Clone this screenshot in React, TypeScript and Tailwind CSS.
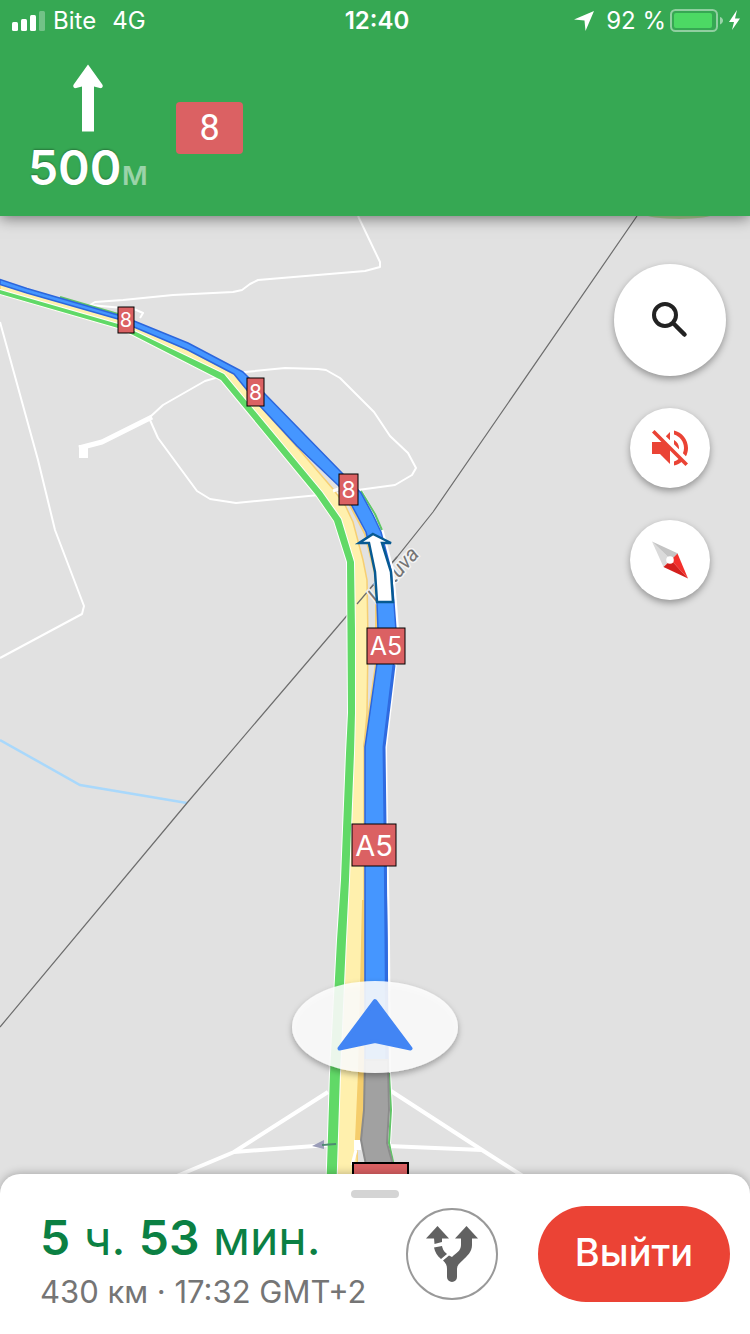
import type { ReactNode } from "react"
import { cx } from "class-variance-authority"

type Shield = {
    label: string,
    x: number,
    y: number,
    width: number,
    height: number,
    fontSize: number,
}

const shields: Shield[] = [
    { label: "8", x: 118, y: 307, width: 16, height: 26, fontSize: 20 },
    { label: "8", x: 247, y: 378, width: 17, height: 28, fontSize: 21 },
    { label: "8", x: 339, y: 474, width: 19, height: 31, fontSize: 23 },
    { label: "A5", x: 367, y: 628, width: 38, height: 36, fontSize: 25 },
    { label: "A5", x: 352, y: 824, width: 44, height: 42, fontSize: 29 },
    { label: "", x: 353, y: 1163, width: 55, height: 50, fontSize: 30 },
]

const StatusBar = () => {
    return (
        <div className="grid h-[42px] grid-cols-3 items-center pr-2 pl-3 text-2xl">
            <div className="flex items-center gap-2">
                <svg width="33" height="20" viewBox="0 0 33 20" fill="#fff" aria-hidden="true">
                    <rect x="0" y="11" width="6" height="9" rx="1.5" />
                    <rect x="9" y="8" width="6" height="12" rx="1.5" />
                    <rect x="18" y="4" width="6" height="16" rx="1.5" />
                    <rect x="27" y="0" width="6" height="20" rx="1.5" opacity="0.3" />
                </svg>
                <span>Bite</span>
                <span className="ml-2">4G</span>
            </div>
            <time className="text-center font-semibold">12:40</time>
            <div className="flex items-center justify-end gap-2">
                <svg width="20" height="20" viewBox="0 0 20 20" fill="#fff" className="mr-1" aria-hidden="true">
                    <path d="M20 0 11.5 20 10.5 9.5 0 8.5Z" />
                </svg>
                <span className="whitespace-nowrap">92 %</span>
                <svg width="72" height="24" viewBox="0 0 72 24" className="-ml-1" aria-hidden="true">
                    <rect x="1" y="1" width="46" height="21" rx="4.5" fill="none" stroke="#fff" strokeOpacity="0.45" strokeWidth="2" />
                    <rect x="4" y="4" width="38" height="15" rx="2" fill="#4cd964" />
                    <path d="M50 8c4 1 4 6 0 7.5Z" fill="#fff" opacity="0.5" />
                    <path d="M67 1 59 13h5L62 21 70 9.5h-5Z" fill="#fff" />
                </svg>
            </div>
        </div>
    )
}

const Header = () => {
    return (
        <header className="relative z-10 h-[216px] bg-[#36a853] text-white shadow-[0_2px_14px_rgba(0,0,0,0.5)]">
            <StatusBar />
            <div className="flex items-start pt-[22px] pl-7">
                <div className="flex w-[120px] flex-col items-center">
                    <svg width="30" height="68" viewBox="0 0 30 68" fill="#fff" aria-hidden="true">
                        <path d="M15 .5 29.300 20.500c1.300 2-.3 4.200-2.500 3.500L21 22.500V67.500H9V22.500L3.200 24C1 24.700-.6 22.500.7 20.500Z" />
                    </svg>
                    <p className="mt-3 flex items-baseline leading-[50px]">
                        <span className="text-5xl font-semibold [text-shadow:0_-1px_2px_rgba(0,0,0,0.3)]">500</span>
                        <span className="text-[34px] font-medium text-white/50">м</span>
                    </p>
                </div>
                <span className="mt-[38px] ml-7 flex h-[52px] w-[67px] items-center justify-center rounded bg-[#db6163] font-[Roboto,sans-serif] text-4xl">
                    8
                </span>
            </div>
        </header>
    )
}

const RoadMap = () => {
    return (
        <svg className="block h-full w-full" viewBox="0 216 750 982" preserveAspectRatio="xMidYMin slice" role="img" aria-label="Карта">
            <defs>
                <filter id="puck-shadow" x="-20%" y="-20%" width="140%" height="160%">
                    <feDropShadow dx="0" dy="3" stdDeviation="3" floodColor="#000" floodOpacity="0.35" />
                </filter>
            </defs>
            <rect x="0" y="216" width="750" height="982" fill="#e1e1e1" />
            <ellipse cx="679" cy="214" rx="34" ry="5" fill="#b5d99c" />

            {/* minor roads */}
            <g fill="none" stroke="#fff" strokeLinejoin="round" strokeWidth="2">
                <path d="M358 216 380 262 380 267 365 271 258 280 250 284 242 290 233 292 173 295 123 300 95 302 90 305 134 309 143 313 140 318" />
                <path d="M0 322 38 460 55 530 84 606 82 614 0 658" />
                <path d="M150 417 163 405 205 381 222 376 245 372 285 368 318 369 326 370 340 378 374 412 390 436 408 453 416 468 412 475 395 485 358 490 340 493 236 503 210 499 197 491 158 438 150 420" />
                <path d="M79 448 102 442 152 417" strokeWidth="5" />
                <path d="M83.500 445V458" strokeWidth="9" />
            </g>
            <g fill="none" stroke="#fff" strokeWidth="4">
                <path d="M328 1092 234 1152 165 1181" />
                <path d="M234 1152 328 1145" />
                <path d="M391 1091 482 1150 545 1190" />
                <path d="M388 1146 482 1150" />
            </g>

            {/* river and border */}
            <path d="M0 740 80 785 187 803" fill="none" stroke="#a9d8fb" strokeWidth="2.500" />
            <path d="M637 216 433 512 397 557 187 803 0 1027" fill="none" stroke="#6d6d6d" strokeWidth="1.200" />

            {/* main road */}
            <path
                d="M0 284 27 292 118 318 134 326 188 350 234 374 260 406 297 447 333 489 345 505 353 522 363 560 367 580 368 640 367 713 364 747 364 1073 363 1110 357 1150 358 1198 H328 L333 1073 340 940 344 880 347 753 349 713 348 562 334 521 316 495 221 380 133 335 118 328 0 294Z"
                fill="#fff0ad"
                stroke="#f6cf73"
                strokeWidth="1.500"
            />
            <path d="M362 900H365V1073L362 1140H355L358 1073Z" fill="#f5cd6b" />
            <path d="M354 1140H361V1150H354Z" fill="#fff" />
            <path d="M333 491 341 488 351 503 M356 1150 352 1165" fill="none" stroke="#fff" strokeWidth="3" />
            <path d="M341 490 351 507 365 534 375 574 376 603 376 663 364 747" fill="none" stroke="#f6cf73" strokeWidth="2" />

            {/* alternative route */}
            <path
                d="M0 290 118 324 134 331 224 374 322 492 341 519 354 562 355 630 355 713 354 753 349 880 346 940 340 1073 336 1198 H326 L330 1073 337 940 341 880 346 753 348 713 347 562 334 521 316 495 221 380 133 335 118 328 0 294Z"
                fill="#61d967"
                stroke="#fff"
                strokeWidth="2"
                paintOrder="stroke"
            />

            <path d="M397 557 357 604" stroke="#6d6d6d" strokeWidth="1.200" />
            <text
                transform="translate(377 604) rotate(-49)"
                fontFamily="Roboto, sans-serif"
                fontStyle="italic"
                fontSize="21"
                fill="#757575"
                stroke="#f3f3f3"
                strokeWidth="3"
                paintOrder="stroke"
            >
                Lietuva
            </text>

            {/* active route */}
            <g strokeLinejoin="round">
                <path d="M361 492 374 514 382 532 392 570 395 603 397 630 395 663 385 747 386 825 387 880 388 940 389 1073 391 1110 389 1143 397 1198" fill="none" stroke="#fff" strokeWidth="4" />
                <path d="M60 297 118 314 M361 491 375 514 382 530 M389 1073 391 1110 389 1143 397 1180" fill="none" stroke="#61c467" strokeWidth="2" />
                <path
                    d="M0 279.500 27 288.500 118 315 134 321 188 343 243 372 264 393 342 473 361 493 373 515 381 532 391 570 394 603 396 630 394 663 384 747 385 825 386 880 387 940 388 1073 H365 L365 880 365 747 377 663 378 630 377 603 376 572 366 532 351 504 340 487 297 446 260 406 234 374 188 350 134 327 118 319 27 293 0 284.500Z"
                    fill="#4596ff"
                    stroke="#2c66dc"
                    strokeWidth="1.500"
                />
                <path d="M394 665 384 747 385 825 386 940 387 1073" fill="none" stroke="#2f6be0" strokeWidth="3" />
                <path d="M365 1060 H388 L389 1110 387 1143 393 1165V1198H366V1165L361 1140 364 1110Z" fill="#a1a1a1" stroke="#8b8b8b" strokeWidth="2" />
            </g>

            {/* next maneuver */}
            <path d="M373 534 391 543 382 543 391 572 393 602 377 602 375 572 369 543 359 543Z" fill="#fff" stroke="#075a92" strokeWidth="2.500" />

            {/* one way marker */}
            <path d="M312 1146 324 1140V1149Z" fill="#9a9cb8" />
            <path d="M322 1145 336 1144" stroke="#4f8a72" strokeWidth="2" />

            {shields.map(({ label, x, y, width, height, fontSize }) => (
                <g key={`${x}-${y}`}>
                    <rect x={x} y={y} width={width} height={height} fill="#db6163" stroke="#000" strokeWidth={label ? 1 : 2} />
                    <text
                        x={x + width / 2}
                        y={y + height / 2 + fontSize * 0.37}
                        textAnchor="middle"
                        fontFamily="Inter, sans-serif"
                        fontSize={fontSize}
                        fill="#fff"
                    >
                        {label}
                    </text>
                </g>
            ))}

            {/* current position */}
            <ellipse cx="375" cy="1027" rx="83" ry="46" fill="#fff" fillOpacity="0.86" filter="url(#puck-shadow)" />
            <path d="M375 1001 410.500 1048.500 375 1041 339.500 1048.500Z" fill="#4285f4" stroke="#4285f4" strokeWidth="4" strokeLinejoin="round" />
        </svg>
    )
}

type MapButtonProps = {
    label: string,
    size: string,
    children: ReactNode,
}
const MapButton = ({ label, size, children }: MapButtonProps) => {
    return (
        <button
            type="button"
            aria-label={label}
            className={cx("flex items-center justify-center rounded-full bg-white shadow-[0_3px_7px_rgba(0,0,0,0.35)]", size)}
        >
            {children}
        </button>
    )
}

const MapControls = () => {
    return (
        <div className="absolute top-12 right-6 flex flex-col items-center gap-8">
            <MapButton label="Поиск" size="size-28">
                <svg width="36" height="36" viewBox="0 0 36 36" fill="none" stroke="#222" strokeLinecap="round">
                    <circle cx="13" cy="13" r="11" strokeWidth="4" />
                    <path d="M21.500 21.500 23 23" strokeWidth="4" />
                    <path d="M24 24 32.500 32.500" strokeWidth="4.500" />
                </svg>
            </MapButton>
            <MapButton label="Звук выключен" size="size-20">
                <svg width="48" height="48" viewBox="0 0 24 24" fill="#ea4335">
                    <path d="M16.500 12c0-1.770-1.020-3.290-2.500-4.030v2.210l2.450 2.450c.03-.2.05-.41.05-.63zm2.500 0c0 .94-.2 1.820-.54 2.640l1.510 1.510C20.630 14.910 21 13.500 21 12c0-4.280-2.990-7.860-7-8.770v2.060c2.890.86 5 3.540 5 6.710zM4.270 3 3 4.270 7.730 9H3v6h4l5 5v-6.730l4.250 4.250c-.67.52-1.420.93-2.250 1.180v2.060c1.380-.31 2.630-.95 3.690-1.810L19.730 21 21 19.730l-9-9L4.270 3zM12 4 9.910 6.090 12 8.180V4z" />
                </svg>
            </MapButton>
            <MapButton label="Компас" size="size-20">
                <svg width="40" height="40" viewBox="0 0 40 40">
                    <path d="M2 1.500 28 13.500 21 20Z" fill="#c4c4c4" />
                    <path d="M2 1.500 21 20 13.500 27Z" fill="#dadada" />
                    <path d="M27.500 13.500 38 38.500 21 20Z" fill="#f3302c" />
                    <path d="M13.500 27 21 20 38 38.500Z" fill="#d4201d" />
                    <circle cx="20" cy="20" r="3.800" fill="#fff" />
                </svg>
            </MapButton>
        </div>
    )
}

const TripSheet = () => {
    return (
        <footer className="relative -mt-6 rounded-t-[20px] border-b-2 border-[#d6d6d6] bg-white pt-4 pb-[30px] shadow-[0_-1px_8px_rgba(0,0,0,0.25)]">
            <div className="mx-auto h-2 w-12 rounded-full bg-[#d4d4d4]" />
            <div className="mt-2 flex items-start pr-5 pl-10">
                <div className="flex-1 whitespace-nowrap">
                    <p className="text-5xl leading-[64px] text-[#0b8043]">
                        <b className="font-semibold">5</b> ч. <b className="font-semibold">53</b> мин.
                    </p>
                    <p className="text-[31px] leading-[44px] text-[#757575]">430 км · 17:32 GMT+2</p>
                </div>
                <button type="button" aria-label="Другие маршруты" className="mt-[2px] flex size-[92px] items-center justify-center rounded-full border-2 border-[#999]">
                    <svg width="52" height="58" viewBox="0 0 52 58" fill="#616161">
                        <path d="M0 13.500 11.500 1 23 13.500Z" />
                        <path d="M29 13.500 40.500 1 52 13.500Z" />
                        <path d="M8 13H16V17L8.500 19Z" />
                        <path d="M8 22.500 16 21C17 25 18 26.500 21 29L15 34C11 31 9 27 8 22.500Z" />
                        <path d="M35 13H46V20C46 27 41 31 37 35C33 38.500 31 40.500 31 44V52A5 5 0 0 1 21 52V44C21 40.500 20 38.500 17 35.500L23 30.500 26 32C30 28 35 26 35 20Z" />
                    </svg>
                </button>
                <button type="button" className="ml-10 h-24 w-48 rounded-full bg-[#eb4335] pb-1 text-[38px] font-medium text-white">
                    Выйти
                </button>
            </div>
        </footer>
    )
}

const App = () => {
    return (
        <div className="flex min-h-screen flex-col bg-white font-[Inter,'Noto_Sans',sans-serif]">
            <Header />
            <main className="relative flex-1">
                <RoadMap />
                <MapControls />
            </main>
            <TripSheet />
        </div>
    )
}
export default App
